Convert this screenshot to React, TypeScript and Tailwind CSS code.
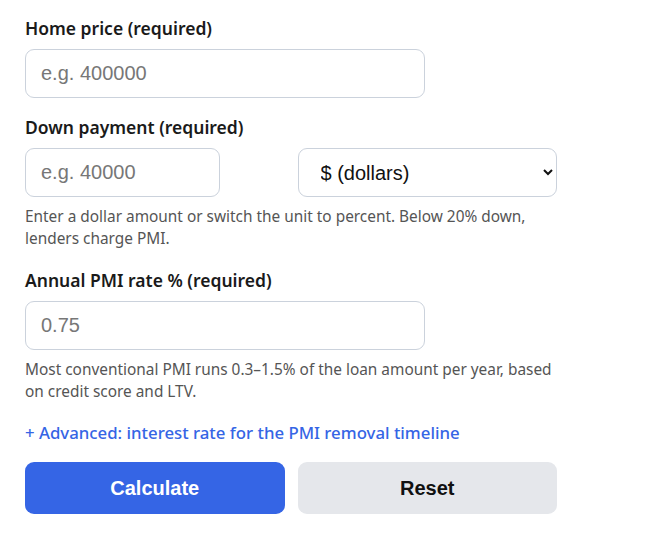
import React from "react";

const labelCls =
  "block text-[17.5px] leading-[22px] font-semibold text-[#1a1a1a] mb-[10px]";
const inputCls =
  "block border border-[#cbd2dc] rounded-[9px] bg-white px-[15px] py-[12px] text-[20px] leading-[23px] text-[#222] placeholder:text-[#777]";
const helpCls = "text-[15.4px] leading-[22px] text-[#555] mt-[9px]";

export default function App() {
  return (
    <div
      className="bg-white w-[652px] h-[547px] pt-[17px] pl-[25px]"
      style={{ fontFamily: '"Noto Sans", "Open Sans", sans-serif' }}
    >
      <div className="w-[532px] flex flex-col">
        <div>
          <label className={labelCls}>Home price (required)</label>
          <input
            className={inputCls + " w-[400px]"}
            style={{ fontFamily: '"Liberation Sans", Arial, sans-serif' }}
            placeholder="e.g. 400000"
          />
        </div>

        <div className="mt-[18px]">
          <label className={labelCls}>Down payment (required)</label>
          <div className="grid grid-cols-2 gap-[13px]">
            <input
              className={inputCls + " w-[195px]"}
              style={{ fontFamily: '"Liberation Sans", Arial, sans-serif' }}
              placeholder="e.g. 40000"
            />
            <select
              className="block w-full h-[49px] border border-[#cbd2dc] rounded-[9px] bg-white pl-[18px] pr-[8px] text-[20px] text-[#111]"
              style={{ fontFamily: '"Liberation Sans", Arial, sans-serif' }}
              defaultValue="dollars"
            >
              <option value="dollars">$ (dollars)</option>
              <option value="percent">% (percent)</option>
            </select>
          </div>
          <p className={helpCls}>
            Enter a dollar amount or switch the unit to percent. Below 20% down,
            lenders charge PMI.
          </p>
        </div>

        <div className="mt-[19px]">
          <label className={labelCls}>Annual PMI rate % (required)</label>
          <input
            className={inputCls + " w-[400px]"}
            style={{ fontFamily: '"Liberation Sans", Arial, sans-serif' }}
            placeholder="0.75"
          />
          <p className={helpCls}>
            Most conventional PMI runs 0.3–1.5% of the loan amount per year, based
            on credit score and LTV.
          </p>
        </div>

        <button className="mt-[18px] self-start text-[16.8px] leading-[24px] font-medium text-[#3565e5] text-left">
          + Advanced: interest rate for the PMI removal timeline
        </button>

        <div
          className="grid grid-cols-2 gap-[13px] mt-[17px]"
          style={{ fontFamily: '"Liberation Sans", Arial, sans-serif' }}
        >
          <button className="h-[52px] rounded-[9px] bg-[#3565e5] text-white text-[20px] font-bold">
            Calculate
          </button>
          <button className="h-[52px] rounded-[9px] bg-[#e5e7eb] text-[#111] text-[20px] font-bold">
            Reset
          </button>
        </div>
      </div>
    </div>
  );
}
